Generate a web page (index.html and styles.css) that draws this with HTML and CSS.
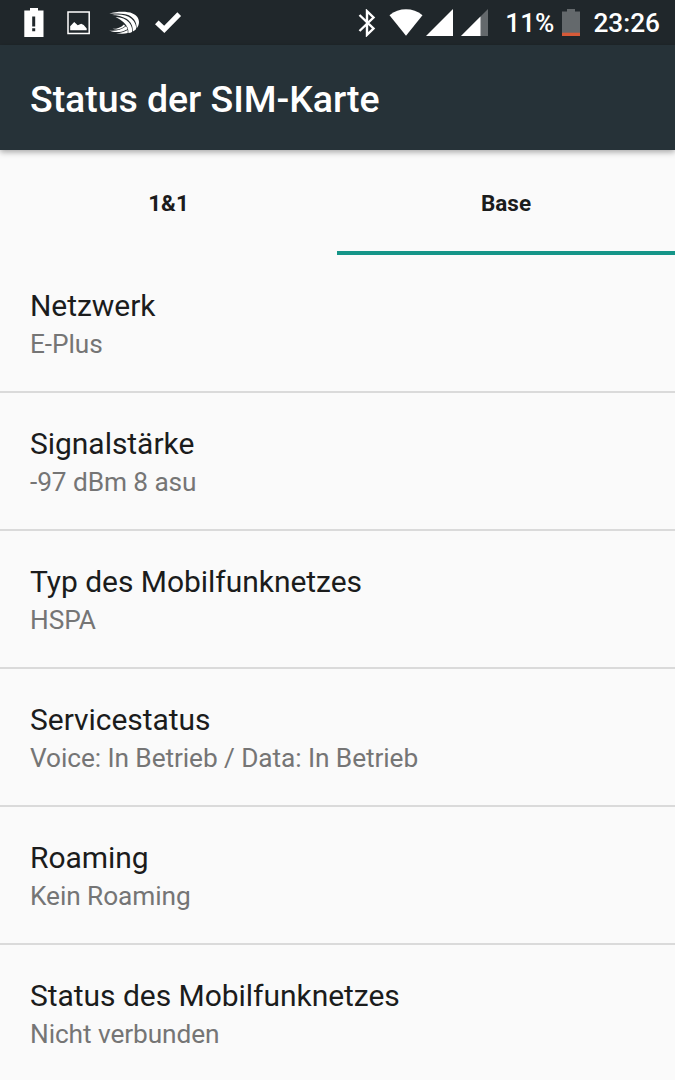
FILE: index.html
```html
<!DOCTYPE html>
<html lang="de">
<head>
  <meta charset="UTF-8">
  <meta name="viewport" content="width=device-width, initial-scale=1.0">
  <title>Status der SIM-Karte</title>
  <link rel="stylesheet" href="styles.css">
</head>
<body>
  <div class="status-bar">
      <div class="notifications">
          <svg class="alert" width="20" height="30" viewBox="0 0 20 30">
              <path fill="#fff" fill-rule="evenodd" d="M6 0h8v2.500h5.500V29H.3V2.500H6zM8.200 8.500v10h3v-10zM8.200 20.300v3h3v-3z"/>
          </svg>
          <svg class="picture" width="24" height="24" viewBox="0 0 24 24">
              <rect x="1" y="1" width="21.200" height="21.500" fill="none" stroke="#fff" stroke-width="1.500"/>
              <path fill="#fff" d="M3.200 19.300v-4l4-4.300 3.500 3.300 3.500-1.600 2.500 1.300 3 3.500v1.800z"/>
          </svg>
          <svg class="swift" width="32" height="24" viewBox="0 0 32 24">
              <g fill="#fff">
                  <path d="M.3 2.500C8 .4 18 .2 23.500 2.400c4.300 1.700 6.500 5 6.500 8.600 0 2.500-.9 4.700-2.400 6.500C28 10.500 24 5.500 17.500 3.600 12 2.100 6 2.400.3 2.500z"/>
                  <path d="M3 3.900c8-1 15 .1 19.500 3.900 3.700 3.200 5 7 4.500 10.400-.9 1-2 1.800-3.200 2.400C24 15.500 22.300 11 17.500 7.800 13 5.100 8.500 4.100 3 3.900z"/>
                  <path d="M6.500 6c6 .1 10.500 2 13.500 5.400 2.500 3 3.600 6.200 3 9.600-1.100.6-2.300.9-3.600 1.100.3-4.100-1.100-7.500-4.600-10.600C12.500 9.300 9.700 7.400 6.500 6z"/>
                  <path d="M.3 19.500c5.500.8 11.500-.3 16.800-4.200.8 1 1.200 1.900 1.400 2.900C12.500 21.600 6 22 .3 19.500z"/>
                  <path d="M3.500 17.800c4.500.1 8.500-1.200 11.400-4.400l1.300 1.500c-3.700 3.200-8.200 4.300-12.700 2.900z"/>
                  <path d="M7 22c4.500 0 8.500-1 11.700-3.100v3.200C15 23 10.800 23 7 22z"/>
              </g>
          </svg>
          <svg class="check" width="28" height="23" viewBox="0 0 28 23">
              <path d="M2.800 11.300l7.500 7L25.200 3.200" fill="none" stroke="#fff" stroke-width="5.200"/>
          </svg>
      </div>
      <div class="system">
          <svg class="bluetooth" width="18" height="28" viewBox="0 0 18 28">
              <path d="M1.500 6l14 13.500L9 25.800V2.200l6.500 6.300L1.500 22" fill="none" stroke="#fff" stroke-width="2.400"/>
          </svg>
          <svg class="wifi" width="34" height="27" viewBox="0 0 34 27">
              <path fill="#fff" d="M.5 6.200C10-1.700 24-1.700 33.500 6.200L17 26.700z"/>
          </svg>
          <svg class="signal" width="27" height="27" viewBox="0 0 27 27">
              <path fill="#fff" d="M0 27L27 0v27z"/>
          </svg>
          <svg class="signal2" width="27" height="27" viewBox="0 0 27 27">
              <path fill="#64696c" d="M0 27L27 0v27z"/>
              <path fill="#fff" d="M0 27L19.500 7.500V27z"/>
          </svg>
          <span class="percent">11%</span>
          <svg class="battery" width="18" height="27" viewBox="0 0 18 27">
              <path fill="#64696c" d="M5 0h8v2.500h5V24H0V2.500h5z"/>
              <path fill="#d75a38" d="M0 23.700h18V27H0z"/>
          </svg>
          <span class="clock">23:26</span>
      </div>
  </div>
  <div class="header">Status der SIM-Karte</div>
  <div class="tabs">
      <div class="tab">1&amp;1</div>
      <div class="tab active">Base</div>
  </div>
  <div class="list">
      <div class="item">
          <div class="title">Netzwerk</div>
          <div class="summary">E-Plus</div>
      </div>
      <div class="item">
          <div class="title">Signalstärke</div>
          <div class="summary">-97 dBm 8 asu</div>
      </div>
      <div class="item">
          <div class="title">Typ des Mobilfunknetzes</div>
          <div class="summary">HSPA</div>
      </div>
      <div class="item">
          <div class="title">Servicestatus</div>
          <div class="summary">Voice: In Betrieb / Data: In Betrieb</div>
      </div>
      <div class="item">
          <div class="title">Roaming</div>
          <div class="summary">Kein Roaming</div>
      </div>
      <div class="item">
          <div class="title">Status des Mobilfunknetzes</div>
          <div class="summary">Nicht verbunden</div>
      </div>
  </div>
</body>
</html>
```
FILE: styles.css
```css
* {
    box-sizing: border-box;
}
body {
    font-family: Roboto, sans-serif;
    background: #fafafa;
    color: #1b1c1c;
    height: 1080px;
    margin: 0;
    overflow: hidden;
}
.status-bar {
    display: flex;
    justify-content: space-between;
    height: 45px;
    padding: 0 15px 0 24px;
    background: #20272b;
    color: #fff;
    font-size: 26.25px;
    font-weight: 500;
    line-height: 47px;
}
.notifications,
.system {
    display: flex;
    align-items: flex-start;
}
.alert {
    margin: 8px 23px 0 0;
}
.picture {
    margin: 11px 18px 0 0;
}
.swift {
    margin: 11px 13px 0 0;
}
.check {
    margin-top: 11px;
}
.bluetooth {
    margin: 9px 13px 0 0;
}
.wifi {
    margin: 9px 3px 0 0;
}
.signal {
    margin: 9px 8px 0 0;
}
.signal2 {
    margin: 9px 17px 0 0;
}
.battery {
    margin: 9px 13px 0 8px;
}
.header {
    height: 105px;
    padding-left: 30px;
    background: #263238;
    box-shadow: 0 2px 6px rgba(0, 0, 0, 0.35);
    color: #fff;
    font-size: 37.5px;
    font-weight: 500;
    letter-spacing: -0.06px;
    line-height: 108px;
}
.tabs {
    display: flex;
    height: 105px;
}
.tab {
    width: 337px;
    border-bottom: 4px solid transparent;
    font-size: 22.5px;
    font-weight: 700;
    line-height: 106px;
    text-align: center;
}
.active {
    flex: 1;
    border-bottom-color: #159588;
}
.item {
    height: 138px;
    padding: 31px 30px 0;
    border-bottom: 2px solid #dadada;
}
.title {
    font-size: 30px;
    letter-spacing: -0.04px;
    line-height: 40px;
}
.summary {
    color: #757575;
    font-size: 26.25px;
    letter-spacing: -0.08px;
    line-height: 36px;
}
```
